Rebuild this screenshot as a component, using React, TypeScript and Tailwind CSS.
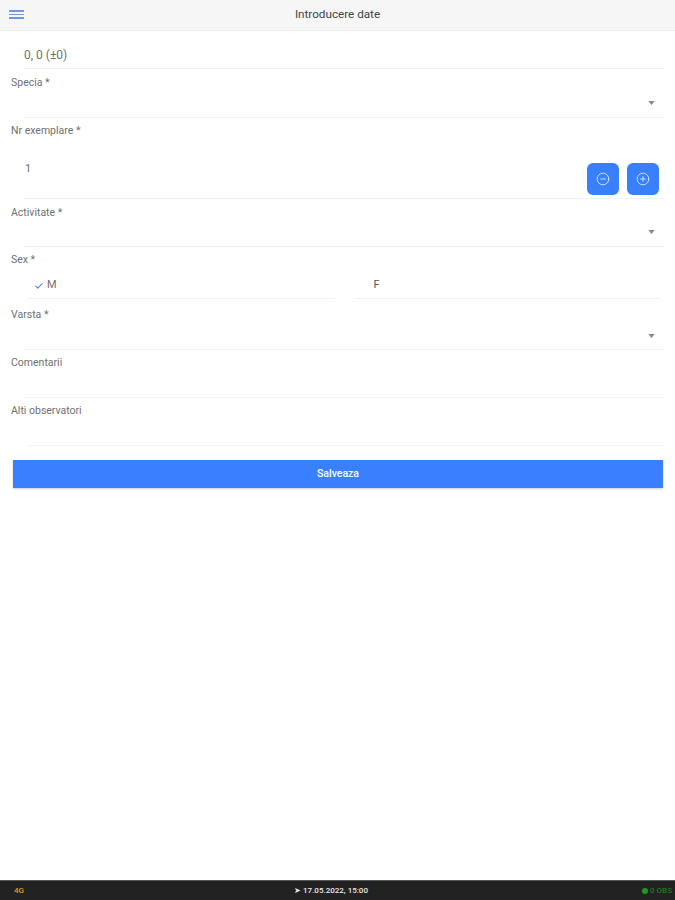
import { Check, CircleMinus, CirclePlus } from 'lucide-react';

const font = "font-['Roboto',sans-serif]";

function Caret() {
  return (
    <svg width="7" height="4" viewBox="0 0 8 5" className="mr-[10px]">
      <path d="M0 0h8L4 5z" fill="#8a8a8a" />
    </svg>
  );
}

function SelectField({ label, height = 'h-[35px]', drop = 'pb-[2px]' }: { label: string; height?: string; drop?: string }) {
  return (
    <div className={`${height} flex flex-col`}>
      <div className="pl-[11px] text-[10.5px] leading-[14px] text-[#707070]">{label}</div>
      <div className={`ml-6 mr-[10px] flex flex-1 items-center justify-end border-b border-[#f2f2f2] ${drop}`}>
        <Caret />
      </div>
    </div>
  );
}

function TextField({ label, height = 'h-[48px]', inset = 'ml-6' }: { label: string; height?: string; inset?: string }) {
  return (
    <div className={`${height} flex flex-col`}>
      <div className="pl-[11px] text-[10.5px] leading-[14px] text-[#707070]">{label}</div>
      <div className={`${inset} mr-[10px] flex-1 border-b border-[#f4f4f4]`} />
    </div>
  );
}

export default function App() {
  return (
    <div className={`${font} flex h-[900px] w-[675px] flex-col bg-white`}>
      {/* Header */}
      <header className="relative flex h-[31px] items-center justify-center border-b border-[#ececec] bg-[#f6f6f6]">
        <div className="absolute left-[9px] top-[10px] flex w-[15px] flex-col gap-[2px]">
          <span className="h-[1.5px] bg-[#6f94ea]" />
          <span className="h-[1.5px] bg-[#6f94ea]" />
          <span className="h-[1.5px] bg-[#6f94ea]" />
        </div>
        <span className="text-[11.7px] text-[#444]">Introducere date</span>
      </header>

      <main className="flex flex-1 flex-col">
        <div className="ml-6 mr-[10px] flex h-[38px] items-center border-b border-[#f0f0f0] pt-[10px] text-[12px] text-[#707070]">
          0, 0 (±0)
        </div>

        <div className="pt-[7px]">
          <SelectField label="Specia *" height="h-[42px]" />
        </div>

        <div className="flex h-[81px] flex-col pt-[6px]">
          <div className="pl-[11px] text-[10.5px] leading-[14px] text-[#707070]">Nr exemplare *</div>
          <div className="ml-6 mr-[10px] flex flex-1 items-start justify-between border-b border-[#f2f2f2]">
            <span className="pl-px pt-[24px] text-[11px] leading-[14px] text-[#707070]">1</span>
            <div className="mr-[6px] flex gap-2 pt-[25px]">
              <button type="button" className="flex h-8 w-8 items-center justify-center rounded-[6px] bg-[#3880ff]">
                <CircleMinus size={14} color="#d5e4ff" strokeWidth={1.6} />
              </button>
              <button type="button" className="flex h-8 w-8 items-center justify-center rounded-[6px] bg-[#3880ff]">
                <CirclePlus size={14} color="#d5e4ff" strokeWidth={1.6} />
              </button>
            </div>
          </div>
        </div>

        <div className="pt-[7px]">
          <SelectField label="Activitate *" height="h-[41px]" />
        </div>

        <div className="flex h-[52px] flex-col pt-[6px]">
          <div className="pl-[11px] text-[10.5px] leading-[14px] text-[#707070]">Sex *</div>
          <div className="ml-[28px] mr-[15px] grid flex-1 grid-cols-2 gap-[19px]">
            <div className="flex items-center gap-[3px] border-b border-[#f2f2f2] pl-[6px] pt-[6px] text-[11px] text-[#707070]">
              <Check size={10} color="#4a7df0" strokeWidth={2.5} />
              M
            </div>
            <div className="flex items-center border-b border-[#f2f2f2] pl-[20px] pt-[6px] text-[11px] text-[#555]">
              F
            </div>
          </div>
        </div>

        <div className="pt-[9px]">
          <SelectField label="Varsta *" height="h-[42px]" drop="pt-[1px]" />
        </div>

        <div className="pt-[6px]">
          <TextField label="Comentarii" height="h-[42px]" />
        </div>
        <div className="pt-[6px]">
          <TextField label="Alti observatori" height="h-[42px]" inset="ml-7" />
        </div>

        <div className="pl-[13px] pr-[12px] pt-[14px]">
          <button
            type="button"
            className="h-[28px] w-full bg-[#3880ff] text-[10.5px] font-medium text-white shadow-[0_1px_2px_rgba(0,0,0,0.2)]"
          >
            Salveaza
          </button>
        </div>
      </main>

      {/* Status bar */}
      <footer className="flex h-5 items-center justify-between border-t border-[#555] bg-[#222] pl-[14px] pr-[3px] text-[8px] font-medium">
        <span className="w-[60px] text-[#e09a2b]">4G</span>
        <span className="text-[#e8e8e8]">➤ 17.05.2022, 15:00</span>
        <span className="flex w-[84px] items-center justify-end gap-[2px] text-[#1c7a1c]">
          <span className="h-[6px] w-[6px] rounded-full bg-[#1f9a1f]" />0 OBS
        </span>
      </footer>
    </div>
  );
}
